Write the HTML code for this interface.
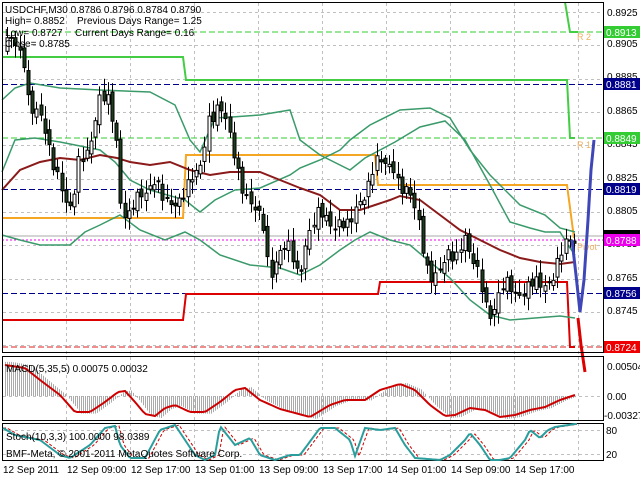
<!DOCTYPE html>
<html><head><meta charset="utf-8"><style>
html,body{margin:0;padding:0;background:#fff;width:640px;height:480px;overflow:hidden}
svg{display:block;font-family:"Liberation Sans",sans-serif;font-size:10px}
</style></head><body>
<svg id="s" width="640" height="480" viewBox="0 0 640 480" xmlns="http://www.w3.org/2000/svg">
<rect width="640" height="480" fill="#fff"/>
<g id="grid" stroke="#c0c0c0" stroke-dasharray="3,3" stroke-width="1"></g>
<g stroke-width="1" stroke-dasharray="6,3">
<line x1="2" y1="32" x2="603" y2="32" stroke="#3c3"/>
<line x1="2" y1="84.5" x2="603" y2="84.5" stroke="#00008b"/>
<line x1="2" y1="138" x2="603" y2="138" stroke="#3c3"/>
<line x1="2" y1="189.5" x2="603" y2="189.5" stroke="#00008b"/>
<line x1="2" y1="293.5" x2="603" y2="293.5" stroke="#00008b"/>
<line x1="2" y1="347" x2="603" y2="347" stroke="#d22"/>
<line x1="2" y1="240" x2="603" y2="240" stroke="#e0e" stroke-dasharray="2,2"/>
<line x1="2" y1="236" x2="603" y2="236" stroke="#aaa" stroke-dasharray="none"/>
</g>
<polyline fill="none" stroke="#f5a623" stroke-width="2" points="2,218 183,218 186,155 375,155 378,185 567,185 574,238"/>
<polyline fill="none" stroke="#d00" stroke-width="2" points="2,320 183,320 186,294 378,294 380,282 567,282 570,347 575,347"/>
<polyline fill="none" stroke="#4c4" stroke-width="2" points="2,57 183,57 186,80 567,80 570,138 575,138"/>
<polyline fill="none" stroke="#4c4" stroke-width="2" points="565,2 570,32 578,32"/>
<text x="577" y="40" fill="#f0b060" font-size="9">R 2</text>
<text x="577" y="148" fill="#f0b060" font-size="9">R 1</text>
<text x="577" y="250" fill="#f0b060" font-size="9">Pivot</text>
<g fill="none" stroke="#3a9a6a" stroke-width="1.5">
<polyline points="2,100 15,88 30,83 60,88 100,90 150,92 175,105 190,140 200,152 215,118 232,117 260,115 290,110 300,140 320,155 350,170 365,158 395,142 420,127 445,121 465,140 490,185 510,222 530,228 545,232 560,232 570,248 575,255"/>
<polyline points="2,172 15,140 35,138 60,142 100,150 115,162 130,180 150,190 185,200 200,212 215,200 235,190 260,188 290,175 300,168 320,160 340,150 350,140 370,125 400,110 430,108 450,118 470,150 490,175 520,205 545,215 560,228 575,232"/>
<polyline points="2,235 20,240 40,245 70,245 85,232 100,225 120,215 140,230 165,240 185,232 200,240 220,255 250,265 280,268 300,275 320,265 340,250 355,240 370,232 390,240 410,245 430,262 450,278 470,300 490,315 510,320 535,318 560,316 575,318"/>
</g>
<polyline fill="none" stroke="#8b1a1a" stroke-width="2" points="2,190 20,170 40,162 60,158 80,160 100,155 117,158 130,162 150,165 170,162 190,170 210,175 230,172 260,172 280,180 300,188 320,195 340,210 360,210 375,205 390,200 400,196 420,200 440,215 460,230 480,240 500,250 520,258 540,262 560,264 575,262"/>
<g id="candles"></g>
<polyline fill="none" stroke="#3f47b8" stroke-width="3" points="572,240 576,275 580,312 584,280 588,220 591,170 594,140"/>
<polyline fill="none" stroke="#d00" stroke-width="3" points="578,318 581,345 585,372"/>
<g fill="#000" font-size="10">
<text x="5" y="13">USDCHF,M30  0.8786 0.8796 0.8784 0.8790</text>
<text x="5" y="24">High= 0.8852</text><text x="77" y="24">Previous Days Range= 1.25</text>
<text x="5" y="36">Low= 0.8727</text><text x="75" y="36">Current Days Range= 0.16</text>
<text x="5" y="47">Close= 0.8785</text>
</g>
<rect x="2.5" y="2.5" width="601" height="350" fill="none" stroke="#000"/>
<rect x="2.5" y="356.5" width="601" height="64" fill="none" stroke="#000"/>
<rect x="2.5" y="423.5" width="601" height="37" fill="none" stroke="#000"/>
<g id="macd"></g>
<text x="6" y="372" font-size="10">MACD(5,35,5) 0.00075 0.00032</text>
<g id="stoch"></g>
<text x="6" y="440" font-size="10">Stoch(10,3,3) 100.0000 98.0389</text>
<text x="6" y="457" font-size="10">BMF-Meta, © 2001-2011 MetaQuotes Software Corp.</text>
<g font-size="10" fill="#000" id="axis"></g>
<g font-size="10">
<rect x="604" y="26" width="36" height="12" fill="#3c3"/><text x="606" y="36" fill="#fff">0.8913</text>
<rect x="604" y="78" width="36" height="12" fill="#00008b"/><text x="606" y="88" fill="#fff">0.8881</text>
<rect x="604" y="132" width="36" height="12" fill="#3c3"/><text x="606" y="142" fill="#fff">0.8849</text>
<rect x="604" y="183" width="36" height="12" fill="#00008b"/><text x="606" y="193" fill="#fff">0.8819</text>
<rect x="604" y="230" width="36" height="5" fill="#000"/>
<rect x="604" y="234" width="36" height="12" fill="#e0e"/><text x="606" y="244" fill="#fff">0.8788</text>
<rect x="604" y="287" width="36" height="12" fill="#00008b"/><text x="606" y="297" fill="#fff">0.8756</text>
<rect x="604" y="341" width="36" height="12" fill="#e00"/><text x="606" y="351" fill="#fff">0.8724</text>
<text x="607" y="370">0.00504</text><text x="607" y="400">0.00</text><text x="604" y="419">-0.00327</text>
<text x="606" y="434">80</text><text x="606" y="458">20</text>
</g>
<g font-size="10" fill="#000">
<text x="3" y="473">12 Sep 2011</text><text x="67" y="473">12 Sep 09:00</text><text x="131" y="473">12 Sep 17:00</text>
<text x="195" y="473">13 Sep 01:00</text><text x="259" y="473">13 Sep 09:00</text><text x="323" y="473">13 Sep 17:00</text>
<text x="387" y="473">14 Sep 01:00</text><text x="451" y="473">14 Sep 09:00</text><text x="515" y="473">14 Sep 17:00</text>
</g>
</svg>
<script>
(function(){
var NS="http://www.w3.org/2000/svg";
function el(p,t,a){var e=document.createElementNS(NS,t);for(var k in a)e.setAttribute(k,a[k]);p.appendChild(e);return e;}
function interp(arr,x){if(x<=arr[0][0])return arr[0][1];for(var i=0;i<arr.length-1;i++){if(x<=arr[i+1][0]){var t=(x-arr[i][0])/(arr[i+1][0]-arr[i][0]);return arr[i][1]+t*(arr[i+1][1]-arr[i][1]);}}return arr[arr.length-1][1];}
var g=document.getElementById('grid');
[66,130,194,258,322,386,450,514,578].forEach(function(x){el(g,'line',{x1:x+.5,y1:3,x2:x+.5,y2:460});});
[12,45,79,112,145,179,212,245,279,312,345].forEach(function(y){el(g,'line',{x1:3,y1:y+.5,x2:603,y2:y+.5});});
el(g,'line',{x1:3,y1:396.5,x2:603,y2:396.5});el(g,'line',{x1:3,y1:430.5,x2:603,y2:430.5});el(g,'line',{x1:3,y1:454.5,x2:603,y2:454.5});
var ax=document.getElementById('axis');
[["0.8925",16],["0.8905",47],["0.8885",80],["0.8865",114],["0.8845",147],["0.8825",181],["0.8805",214],["0.8785",247],["0.8765",281],["0.8745",314]].forEach(function(a){el(ax,'text',{x:607,y:a[1]}).textContent=a[0];});
var kp=[[5,50],[10,45],[25,55],[30,100],[40,120],[50,150],[60,170],[70,220],[75,200],[80,160],[90,140],[100,105],[110,105],[117,130],[120,190],[125,210],[130,220],[140,200],[150,180],[155,175],[160,190],[165,210],[170,210],[185,185],[200,180],[210,110],[220,105],[230,140],[240,170],[245,185],[250,200],[255,215],[265,230],[270,270],[280,250],[290,255],[300,275],[305,240],[310,230],[320,220],[340,218],[350,235],[360,200],[375,165],[385,170],[395,160],[400,180],[410,200],[420,225],[430,270],[440,280],[450,255],[460,245],[465,230],[470,260],[475,270],[485,290],[490,310],[500,300],[505,290],[520,287],[540,290],[550,275],[560,260],[575,240]];
var c=document.getElementById('candles');var prev=interp(kp,5);
for(var x=6;x<574;x+=4.2){var cl=interp(kp,x+2)+Math.sin(x*1.7)*9+Math.sin(x*0.63)*5;var op=prev+Math.cos(x*2.3)*4;var hi=Math.min(op,cl)-3-Math.abs(Math.sin(x*0.9))*10;var lo=Math.max(op,cl)+3+Math.abs(Math.cos(x*1.3))*9;
var xx=Math.round(x)+.5;el(c,'line',{x1:xx+1,y1:hi,x2:xx+1,y2:lo,stroke:'#000'});
var ty=Math.min(op,cl),h=Math.max(1,Math.abs(op-cl));el(c,'rect',{x:xx-.5,y:ty,width:3,height:h,fill:cl<op?'#fff':'#1e3d1e',stroke:'#000','stroke-width':1});prev=cl;}
var m=document.getElementById('macd');var pts=[];
var mk=[[5,365],[25,368],[40,380],[60,395],[75,412],[90,412],[105,402],[118,392],[125,391],[135,402],[145,414],[155,416],[165,408],[175,405],[190,412],[205,412],[220,402],[235,390],[245,388],[260,400],[280,409],[310,417],[330,405],[345,400],[365,400],[380,390],[400,384],[415,390],[430,405],[445,416],[455,415],[470,408],[485,410],[500,417],[515,415],[530,410],[545,407],[560,400],[575,395]];
for(var x=5;x<576;x+=2){var y=396+(interp(mk,x-6)-396)*1.1;el(m,'line',{x1:x+.5,y1:396,x2:x+.5,y2:y,stroke:'#aaa'});}
for(var x=5;x<576;x+=3)pts.push(x+','+interp(mk,x));
el(m,'polyline',{points:pts.join(' '),fill:'none',stroke:'#c00','stroke-width':2});
var sk=[[3,428],[15,435],[40,440],[60,455],[70,458],[90,445],[105,428],[115,426],[120,445],[130,458],[145,458],[160,430],[175,425],[195,455],[205,460],[215,455],[220,426],[235,445],[250,438],[260,455],[275,460],[290,455],[300,455],[320,428],[335,428],[350,440],[355,456],[365,428],[380,430],[395,428],[405,445],[415,458],[440,460],[450,455],[465,440],[470,433],[480,445],[490,460],[500,460],[510,458],[525,440],[530,430],[540,438],[548,430],[555,427],[575,424]];
var s=document.getElementById('stoch');var sp=[],sp2=[];
for(var x=3;x<578;x+=2){sp.push(x+','+interp(sk,x));sp2.push(x+','+interp(sk,x-4));}
el(s,'polyline',{points:sp2.join(' '),fill:'none',stroke:'#c00','stroke-dasharray':'3,2'});
el(s,'polyline',{points:sp.join(' '),fill:'none',stroke:'#2a9d9d','stroke-width':2});
})();
</script>
</body></html>
